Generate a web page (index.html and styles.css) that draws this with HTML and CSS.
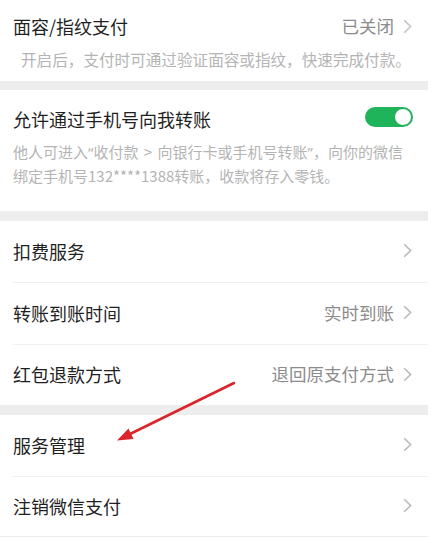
FILE: index.html
```html
<!DOCTYPE html>
<html lang="zh-CN">
<head>
<meta charset="utf-8">
<link rel="stylesheet" href="styles.css">
</head>
<body>
<div class="page">
  <section class="card card-face">
    <div class="head">
      <span class="title">面容/指纹支付</span>
      <span class="right"><span class="value">已关闭</span><svg class="chev" width="9" height="15" viewBox="0 0 9 15"><path d="M1.2 1.2 L7.6 7.5 L1.2 13.8" fill="none" stroke="#c4c4c4" stroke-width="1.6"/></svg></span>
    </div>
    <p class="desc desc-face">开启后，支付时可通过验证面容或指纹，快速完成付款。</p>
  </section>
  <div class="band band-1"></div>
  <section class="card card-phone">
    <div class="head">
      <span class="title">允许通过手机号向我转账</span>
      <span class="toggle"><span class="knob"></span></span>
    </div>
    <p class="desc desc-phone">他人可进入<span class="q">“</span>收付款<span class="gt"> &gt; </span>向银行卡或手机号转账<span class="q">”</span>，向你的微信<br>绑定手机号132****1388转账，收款将存入零钱。</p>
  </section>
  <div class="band"></div>
  <section class="card list">
    <div class="row">
      <span class="title">扣费服务</span>
      <span class="right"><svg class="chev" width="9" height="15" viewBox="0 0 9 15"><path d="M1.2 1.2 L7.6 7.5 L1.2 13.8" fill="none" stroke="#b9b9b9" stroke-width="1.6"/></svg></span>
    </div>
    <div class="row">
      <span class="title">转账到账时间</span>
      <span class="right"><span class="value">实时到账</span><svg class="chev" width="9" height="15" viewBox="0 0 9 15"><path d="M1.2 1.2 L7.6 7.5 L1.2 13.8" fill="none" stroke="#b9b9b9" stroke-width="1.6"/></svg></span>
    </div>
    <div class="row row-last">
      <span class="title">红包退款方式</span>
      <span class="right"><span class="value">退回原支付方式</span><svg class="chev" width="9" height="15" viewBox="0 0 9 15"><path d="M1.2 1.2 L7.6 7.5 L1.2 13.8" fill="none" stroke="#b9b9b9" stroke-width="1.6"/></svg></span>
    </div>
  </section>
  <div class="band"></div>
  <section class="card list">
    <div class="row">
      <span class="title">服务管理</span>
      <span class="right"><svg class="chev" width="9" height="15" viewBox="0 0 9 15"><path d="M1.2 1.2 L7.6 7.5 L1.2 13.8" fill="none" stroke="#b9b9b9" stroke-width="1.6"/></svg></span>
    </div>
    <div class="row row-end">
      <span class="title">注销微信支付</span>
      <span class="right"><svg class="chev" width="9" height="15" viewBox="0 0 9 15"><path d="M1.2 1.2 L7.6 7.5 L1.2 13.8" fill="none" stroke="#b9b9b9" stroke-width="1.6"/></svg></span>
    </div>
  </section>
  <div class="band band-bottom"></div>
  <svg class="arrow" width="435" height="537" viewBox="0 0 435 537">
    <line x1="234" y1="383" x2="128" y2="435" stroke="#d9252b" stroke-width="2.6" stroke-linecap="round"/>
    <polygon points="117,440.5 133.5,439 128.5,428.5" fill="#d9252b"/>
  </svg>
</div>
</body>
</html>
```
FILE: styles.css
```css
html, body {
  margin: 0;
  padding: 0;
  background: #ffffff;
}
body {
  font-family: "Noto Sans CJK SC", "Noto Sans", sans-serif;
  color: #222222;
}
.page {
  width: 428px;
  height: 537px;
  position: relative;
  overflow: hidden;
  display: flex;
  flex-direction: column;
}
.card {
  background: #ffffff;
}
.card-face {
  padding: 14px 16px 11px 13px;
}
.card-phone {
  padding: 17px 15px 24px 13px;
}
.head {
  display: flex;
  align-items: center;
  justify-content: space-between;
  height: 24px;
}
.title {
  font-size: 18px;
  line-height: 24px;
  color: #1f1f1f;
  white-space: nowrap;
}
.right {
  display: flex;
  align-items: center;
  gap: 9px;
}
.value {
  font-size: 17.5px;
  line-height: 24px;
  color: #8c8c8c;
  white-space: nowrap;
}
.chev {
  display: block;
}
.desc {
  margin: 0;
  color: #b4b4b4;
  font-size: 15px;
  white-space: nowrap;
}
.desc-face {
  margin-top: 10px;
  line-height: 22px;
  padding-left: 8px;
  font-size: 15.6px;
}
.desc-phone {
  margin-top: 9px;
  line-height: 23px;
}
.q {
  font-family: "Noto Sans", sans-serif;
}
.gt {
  word-spacing: 2px;
}
.toggle {
  width: 48px;
  height: 20px;
  border-radius: 10px;
  background: #1fb35a;
  position: relative;
  margin-top: -5px;
}
.knob {
  position: absolute;
  right: 1px;
  top: 1px;
  width: 16px;
  height: 16px;
  border-radius: 50%;
  background: #ffffff;
  border: 1px solid #1ea955;
}
.band {
  height: 10px;
  background: #ededed;
  flex: none;
}
.band-1 {
  height: 9px;
}
.band-bottom {
  flex: 1;
}
.list {
  padding-left: 13px;
}
.row {
  display: flex;
  align-items: center;
  justify-content: space-between;
  height: 59px;
  padding-bottom: 2px;
  border-bottom: 1px solid #f0f0f0;
  padding-right: 16px;
}
.row-last {
  height: 58px;
  border-bottom: none;
}
.row-end {
  height: 57px;
  border-bottom: none;
}
.arrow {
  position: absolute;
  left: 0;
  top: 0;
  pointer-events: none;
}
```
